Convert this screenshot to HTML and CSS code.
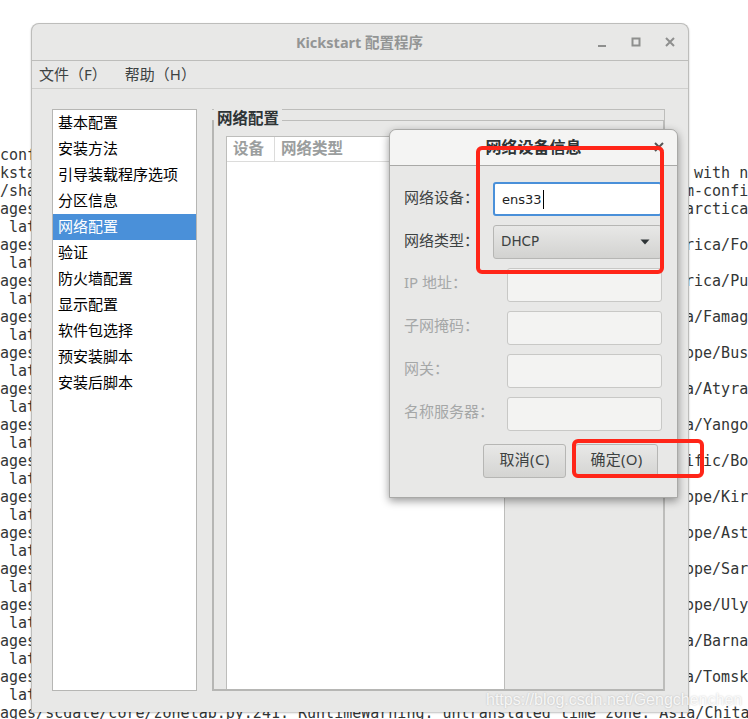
FILE: index.html
```html
<!DOCTYPE html>
<html lang="zh-CN">
<head>
<meta charset="utf-8">
<title>Kickstart 配置程序</title>
<link rel="stylesheet" href="styles.css">
</head>
<body>
<div class="desktop">
  <div class="term">
    <div class="term-cols">
<pre class="term-left">conf
ksta
/sha
ages
 lat
ages
 lat
ages
 lat
ages
 lat
ages
 lat
ages
 lat
ages
 lat
ages
 lat
ages
 lat
ages
 lat
ages
 lat
ages
 lat
ages
 lat
ages
 lat</pre>
<pre class="term-right">

 with n
m-confi
arctica

rica/Fo

rica/Pu

a/Famag

ope/Bus

a/Atyra

a/Yango

ific/Bo

ope/Kir

ope/Ast

ope/Sar

ope/Uly

a/Barna

a/Tomsk</pre>
    </div>
    <pre class="term-last">ages/scdate/core/zonetab.py:241: RuntimeWarning: untranslated time zone: Asia/Chita</pre>
  </div>

  <section class="window">
    <header class="titlebar">
      <span class="title">Kickstart 配置程序</span>
      <div class="controls">
        <svg width="10" height="10" viewBox="0 0 10 10"><path d="M1 9h8" class="ctl"/></svg>
        <svg width="10" height="10" viewBox="0 0 10 10"><rect x="1.5" y="1.5" width="7" height="7" class="ctl"/></svg>
        <svg width="10" height="10" viewBox="0 0 10 10"><path d="M1 1l8 8M9 1l-8 8" class="ctl"/></svg>
      </div>
    </header>
    <nav class="menubar"><span>文件（F）</span><span>帮助（H）</span></nav>
    <main class="content">
      <ul class="sidebar">
        <li>基本配置</li>
        <li>安装方法</li>
        <li>引导装载程序选项</li>
        <li>分区信息</li>
        <li class="selected">网络配置</li>
        <li>验证</li>
        <li>防火墙配置</li>
        <li>显示配置</li>
        <li>软件包选择</li>
        <li>预安装脚本</li>
        <li>安装后脚本</li>
      </ul>
      <div class="frame">
        <div class="group">
          <span class="group-label">网络配置</span>
          <div class="table">
            <div class="thead"><span class="col-device">设备</span><span class="col-type">网络类型</span></div>
          </div>
        </div>
      </div>
    </main>
  </section>

  <section class="dialog">
    <header class="dialog-head">
      <span class="dialog-title">网络设备信息</span>
      <svg class="dialog-close" width="10" height="10" viewBox="0 0 10 10"><path d="M1 1l8 8M9 1l-8 8"/></svg>
    </header>
    <div class="dialog-body">
      <div class="row"><label>网络设备：</label><div class="entry focus">ens33<i class="caret"></i></div></div>
      <div class="row"><label>网络类型：</label><div class="combo"><span>DHCP</span><svg width="10" height="6" viewBox="0 0 10 6"><path d="M0.5 0.5h9L5 5.5z"/></svg></div></div>
      <div class="row off"><label>IP 地址：</label><div class="entry"></div></div>
      <div class="row off"><label>子网掩码：</label><div class="entry"></div></div>
      <div class="row off"><label>网关：</label><div class="entry"></div></div>
      <div class="row off"><label>名称服务器：</label><div class="entry"></div></div>
      <div class="actions"><button><span>取消(C)</span></button><button><span>确定(O)</span></button></div>
    </div>
  </section>

  <div class="mark mark-a"></div>
  <div class="mark mark-b"></div>
  <div class="watermark">https://blog.csdn.net/Gengchenchen</div>
</div>
</body>
</html>
```
FILE: styles.css
```css
* { box-sizing: border-box; }
html, body { margin: 0; padding: 0; background: #fff; }
.desktop {
  position: relative;
  width: 748px;
  height: 719px;
  overflow: hidden;
  font-family: "Noto Sans", "Noto Sans CJK SC", sans-serif;
  font-size: 15px;
}
.term {
  padding-top: 146px;
  color: #333636;
  font-size: 15px;
  line-height: 18px;
}
.term pre {
  margin: 0;
  font-family: "DejaVu Sans Mono", monospace;
  font-size: 15px;
  line-height: 18px;
  white-space: pre;
}
.term-cols { display: flex; justify-content: space-between; }
.term-right { width: 63px; overflow: hidden; }
.window {
  position: absolute;
  left: 31px;
  top: 23px;
  width: 658px;
  height: 689px;
  display: flex;
  flex-direction: column;
  background: #e8e8e7;
  border: 1px solid #bdbdbb;
  border-bottom: none;
  border-radius: 8px 8px 0 0;
  box-shadow: 0 1px 2px rgba(0,0,0,.25);
}
.titlebar {
  position: relative;
  height: 37px;
  flex: none;
  display: flex;
  align-items: center;
  justify-content: center;
  border-bottom: 1px solid #bdbdbb;
}
.title {
  font-weight: 700;
  font-size: 14.5px;
  color: #939595;
  margin-left: -1px;
  padding-bottom: 2px;
}
.controls {
  position: absolute;
  right: 13px;
  top: 13px;
  display: flex;
  gap: 24px;
}
.ctl { fill: none; stroke: #8e8f8e; stroke-width: 2; }
.menubar {
  height: 28px;
  flex: none;
  display: flex;
  align-items: center;
  gap: 18px;
  padding: 0 0 2px 7px;
  border-bottom: 1px solid #cfcfcd;
  color: #3d4242;
}
.content {
  flex: 1;
  min-height: 0;
  display: flex;
  gap: 15px;
  padding: 20px 23px 21px 20px;
}
.sidebar {
  width: 145px;
  margin: 0;
  padding: 0;
  list-style: none;
  background: #fff;
  border: 1px solid #b6b6b4;
  color: #000;
}
.sidebar li {
  height: 26px;
  line-height: 24px;
  padding-left: 5px;
}
.sidebar .selected { background: #4a90d9; color: #fff; }
.frame {
  flex: 1;
  display: flex;
  border-top: 1px solid #bdbdbb;
  border-right: 1px solid #bdbdbb;
  padding-top: 10px;
}
.group {
  position: relative;
  flex: 1;
  display: flex;
  padding: 15px 0 0 12px;
  border-top: 1px solid #bdbdbb;
  border-left: 2px solid #b6b6b4;
  border-right: 1px solid #bdbdbb;
  border-bottom: 2px solid #b6b6b4;
}
.group-label {
  position: absolute;
  left: 0;
  top: -13px;
  padding: 0 3px 0 3px;
  background: #e8e8e7;
  font-weight: 700;
  font-size: 15.5px;
  line-height: 20px;
  color: #2e3436;
}
.table {
  width: 279px;
  background: #fff;
  border: 1px solid #bdbdbb;
  border-bottom: none;
}
.thead {
  height: 25px;
  display: flex;
  border-bottom: 1px solid #dcdcdb;
  font-weight: 700;
  font-size: 15.5px;
  line-height: 22px;
  color: #9b9e9e;
}
.col-device { width: 48px; padding-left: 6px; border-right: 1px solid #dcdcdb; }
.col-type { padding-left: 6px; }
.dialog {
  position: absolute;
  left: 389px;
  top: 129px;
  width: 289px;
  height: 369px;
  display: flex;
  flex-direction: column;
  background: #e8e8e7;
  border: 1px solid #a9a9a7;
  border-radius: 7px 7px 0 0;
  box-shadow: 0 3px 9px rgba(0,0,0,.4);
}
.dialog-head {
  position: relative;
  height: 36px;
  flex: none;
  display: flex;
  align-items: center;
  justify-content: center;
  padding-bottom: 4px;
  background: #f4f4f3;
  border-bottom: 1px solid #a9a9a7;
  border-radius: 7px 7px 0 0;
}
.dialog-title { font-weight: 700; font-size: 16px; color: #2e3436; }
.dialog-close {
  position: absolute;
  right: 13px;
  top: 12px;
  fill: none;
  stroke: #555;
  stroke-width: 2;
}
.dialog-body {
  flex: 1;
  display: flex;
  flex-direction: column;
  gap: 9px;
  padding: 16px 15px 0 14px;
}
.row {
  height: 34px;
  display: flex;
  align-items: center;
  justify-content: space-between;
  color: #3d4242;
}
.row label { padding-bottom: 6px; }
.entry {
  width: 155px;
  height: 34px;
  background: #f3f3f2;
  border: 1px solid #c8c8c6;
  border-radius: 3px;
}
.entry.focus {
  width: 169px;
  display: flex;
  align-items: center;
  padding: 0 0 0 7px;
  background: #fff;
  border: 2px solid #4a90d9;
  font-family: "DejaVu Sans", sans-serif;
  font-size: 13px;
  color: #222;
}
.caret { width: 1px; height: 19px; background: #000; margin-left: 1px; }
.combo {
  width: 169px;
  height: 34px;
  display: flex;
  align-items: center;
  justify-content: space-between;
  padding: 0 11px 1px 8px;
  background: linear-gradient(#e8e8e7, #d2d2d0);
  border: 1px solid #b6b6b4;
  border-radius: 3px;
  font-family: "DejaVu Sans", sans-serif;
  font-size: 13.5px;
  color: #3d4242;
}
.combo span { padding-bottom: 1px; margin-left: -1px; }
.combo svg { fill: #2e3436; }
.row.off { color: #a5a7a7; }
.row.off label { padding-bottom: 8px; }
.actions {
  display: flex;
  justify-content: flex-end;
  gap: 9px;
  margin-top: 4px;
  padding-right: 4px;
}
.actions button {
  width: 83px;
  height: 34px;
  padding: 0 0 6px;
  background: linear-gradient(#e8e8e7, #d4d4d2);
  border: 1px solid #b6b6b4;
  border-radius: 3px;
  font: inherit;
  letter-spacing: .3px;
  color: #3d4242;
}
.mark {
  position: absolute;
  border: 4px solid #ff2518;
  border-radius: 6px;
}
.mark-a { left: 476px; top: 146px; width: 188px; height: 128px; }
.mark-b { left: 572px; top: 439px; width: 132px; height: 39px; }
.watermark {
  position: absolute;
  left: 486px;
  top: 690px;
  font-family: "Liberation Sans", Arial, sans-serif;
  font-size: 16px;
  line-height: 20px;
  color: rgba(255,255,255,.85);
  text-shadow: 0 0 2px rgba(0,0,0,.22);
}
```
